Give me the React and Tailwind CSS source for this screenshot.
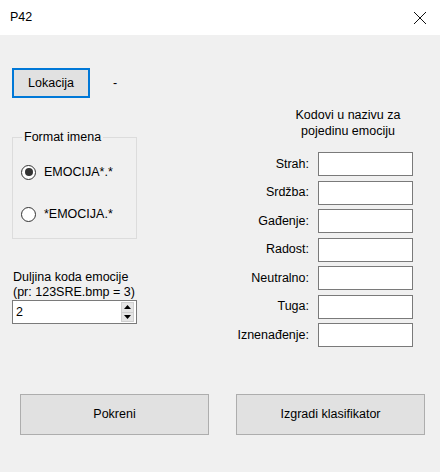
import { useState } from 'react'

const font = { fontFamily: '"Liberation Sans", Arial, sans-serif' }

const emotions = ['Strah:', 'Srdžba:', 'Gađenje:', 'Radost:', 'Neutralno:', 'Tuga:', 'Iznenađenje:']

const Radio = ({ checked, label, onClick }) => (
  <button onClick={onClick} className="flex items-center gap-[8px] h-[16px] text-left">
    <span className="w-[15px] h-[15px] rounded-full border border-[#333] bg-white flex items-center justify-center">
      {checked && <span className="w-[8px] h-[8px] rounded-full bg-[#333]" />}
    </span>
    <span>{label}</span>
  </button>
)

const App = () => {
  const [format, setFormat] = useState(0)
  const [len, setLen] = useState(2)

  return (
    <div style={font} className="w-[440px] h-[472px] bg-[#f0f0f0] text-[12.5px] text-black flex flex-col overflow-hidden">
      {/* title bar */}
      <div className="h-[35px] bg-white flex items-center justify-between pl-[10px] pr-[13px] shrink-0">
        <span className="text-[12.5px]">P42</span>
        <svg width="14" height="14" viewBox="0 0 14 14">
          <path d="M1 1 L13 13 M13 1 L1 13" stroke="#111" strokeWidth="1" />
        </svg>
      </div>

      <div className="flex pl-[12px] pr-[27px]">
        {/* left column */}
        <div className="w-[125px] flex flex-col pt-[33px]">
          <div className="flex items-center">
            <button className="w-[78px] h-[30px] border-2 border-[#0078d7] bg-[#e1e1e1] flex items-center justify-center">
              Lokacija
            </button>
            <span className="ml-[23px]">-</span>
          </div>

          <fieldset className="mt-[32px] h-[109px] border border-[#dcdcdc] px-[8px]">
            <legend className="px-[2px] ml-[1px] leading-[14px]">Format imena</legend>
            <div className="flex flex-col gap-[26px] pt-[20px]">
              <Radio checked={format === 0} label="EMOCIJA*.*" onClick={() => setFormat(0)} />
              <Radio checked={format === 1} label="*EMOCIJA.*" onClick={() => setFormat(1)} />
            </div>
          </fieldset>

          <div className="mt-[31px] leading-[15px] pl-[1px]">
            <div>Duljina koda emocije</div>
            <div>(pr: 123SRE.bmp = 3)</div>
          </div>

          <div className="w-[125px] h-[24px] bg-white border border-[#7a7a7a] flex items-center pl-[3px] pr-[2px]">
            <span className="flex-1">{len}</span>
            <div className="flex flex-col w-[13px] h-[20px]">
              <button
                onClick={() => setLen(len + 1)}
                className="flex-1 bg-[#e5e5e5] border border-[#cfcfcf] flex items-center justify-center"
              >
                <svg width="7" height="4" viewBox="0 0 7 4"><path d="M0 4 L3.5 0 L7 4 Z" fill="#000" /></svg>
              </button>
              <button
                onClick={() => setLen(Math.max(0, len - 1))}
                className="flex-1 bg-[#e5e5e5] border border-[#cfcfcf] border-t-0 flex items-center justify-center"
              >
                <svg width="7" height="4" viewBox="0 0 7 4"><path d="M0 0 L7 0 L3.5 4 Z" fill="#000" /></svg>
              </button>
            </div>
          </div>
        </div>

        {/* right column */}
        <div className="ml-auto w-[180px] flex flex-col pt-[72px]">
          <div className="ml-[57px] w-[116px] text-center leading-[16px]">
            Kodovi u nazivu za<br />pojedinu emociju
          </div>
          <div className="mt-[13px] flex flex-col gap-[4.5px]">
            {emotions.map((e) => (
              <div key={e} className="flex items-center">
                <span className="w-[76px] text-right whitespace-nowrap">{e}</span>
                <input className="ml-[9px] w-[95px] h-[24px] bg-white border border-[#7a7a7a] outline-none px-[3px]" />
              </div>
            ))}
          </div>
        </div>
      </div>

      {/* bottom buttons */}
      <div className="mt-auto mb-[37px] flex justify-between pl-[20px] pr-[15px]">
        <button className="w-[189px] h-[41px] bg-[#e1e1e1] border border-[#adadad]">Pokreni</button>
        <button className="w-[189px] h-[41px] bg-[#e1e1e1] border border-[#adadad]">Izgradi klasifikator</button>
      </div>
    </div>
  )
}

export default App
